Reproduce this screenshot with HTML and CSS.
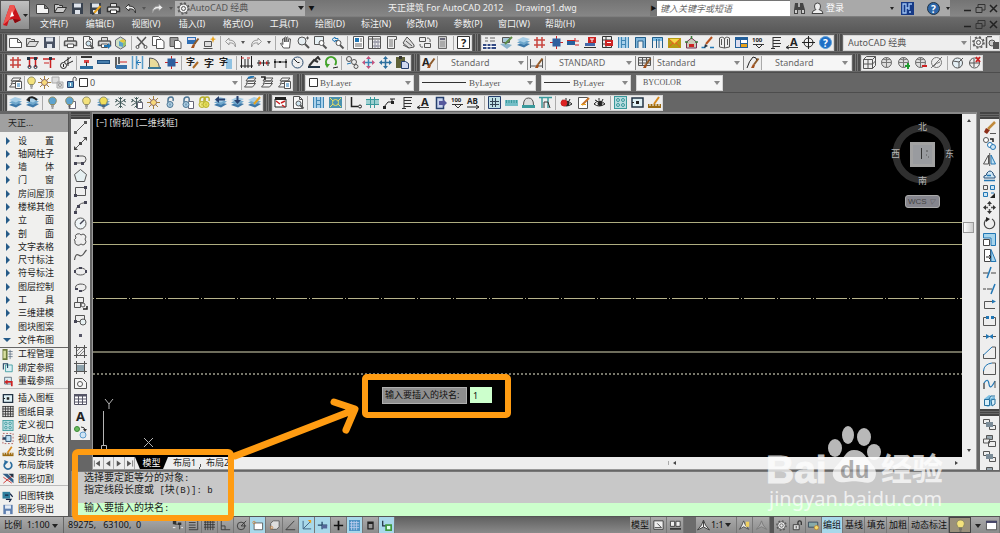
FILE: index.html
```html
<!DOCTYPE html>
<html lang="zh-CN">
<head>
<meta charset="utf-8">
<title>天正建筑 For AutoCAD 2012</title>
<link rel="stylesheet" href="styles.css">
</head>
<body class="app">
<header class="header">
  <button class="logo" aria-label="应用程序菜单">
    <svg width="28" height="28" viewBox="0 0 28 28"><path d="M2 24L9 4h4l7 15-6 3-2-4-4 1-2 6z" fill="#c8141c"/><path d="M9 4h4l1 4-5 10-7 6z" fill="#ef5550"/><path d="M11 10l2 5-4 1z" fill="#fff"/><path d="M12 18l8 1-6 3z" fill="#86090f"/><path d="M22 13h5l-2.500 3z" fill="#222"/></svg>
  </button>
  <div class="header-rows">
    <div class="title-row">
      <div class="quick" data-tools="new-l open-l save-l saveas print-l undo-l v redo-l v"></div>
      <div class="sel workspace"><svg class="sel-icon" data-icon="gear"></svg><select aria-label="工作空间"><option>AutoCAD 经典</option></select></div>
      <button class="mini" aria-label="自定义">▼</button>
      <h1 class="title"><span>天正建筑 For AutoCAD 2012</span><span>Drawing1.dwg</span></h1>
      <button class="mini play" aria-label="展开搜索">▶</button>
      <input class="search" aria-label="搜索" placeholder="键入关键字或短语">
      <div class="account">
        <button class="tool" aria-label="查找"><svg data-icon="binoc"></svg></button>
        <button class="tool" aria-label="用户"><svg data-icon="user"></svg></button>
        <a class="login" href="#">登录</a>
        <span class="caret push"></span>
        <button class="tool wide" aria-label="Exchange"><svg data-icon="exchange"></svg></button>
        <button class="tool wide" aria-label="帮助"><svg data-icon="help-c"></svg></button>
        <span class="caret"></span>
      </div>
      <div class="win" data-tools="min restore close"></div>
    </div>
    <div class="menu-row">
      <nav class="menu">
        <button>文件(F)</button><button>编辑(E)</button><button>视图(V)</button><button>插入(I)</button><button>格式(O)</button><button>工具(T)</button><button>绘图(D)</button><button>标注(N)</button><button>修改(M)</button><button>参数(P)</button><button>窗口(W)</button><button>帮助(H)</button>
      </nav>
      <div class="win" data-tools="min restore close"></div>
    </div>
  </div>
</header>

<section class="bars">
  <div class="bar-row">
    <i class="grip"></i>
    <div class="strip w-std" data-tools="new open save | print preview publish threed | cut copy paste match block | undo v redo v | hand zoomrt zoomwin zoomprev | props dcenter palette sheets markup calc | help"></div>
    <i class="grip"></i>
    <div class="strip w-tz" data-tools="lgrid ledit layers hash column beam redbox redgrid win1 win2 win3 env house penline book appwin level comb aarrow target bluehelp"></div>
    <i class="grip"></i>
    <div class="strip grow">
      <div class="sel w-space"><select class="big" aria-label="工作空间列表"><option>AutoCAD 经典</option></select></div>
      <div class="inner" data-tools="gear wsave"></div>
    </div>
  </div>
  <div class="bar-row">
    <i class="grip"></i>
    <div class="strip w-axis" data-tools="hash tt tred axcut | walli bar lwall barrow arch column | zi1 zi zibox | dim1 dim2 dim3 angle crane refresh | findobj movered moveblue pasteb"></div>
    <i class="grip"></i>
    <div class="strip w-style">
      <div class="pair"><button class="tool" aria-label="文字样式"><svg data-icon="abrush"></svg></button><div class="sel"><select class="pad" aria-label="文字样式列表"><option>Standard</option></select></div></div>
      <div class="pair"><button class="tool" aria-label="标注样式"><svg data-icon="dbrush"></svg></button><div class="sel"><select class="pad" aria-label="标注样式列表"><option>STANDARD</option></select></div></div>
      <div class="pair"><button class="tool" aria-label="表格样式"><svg data-icon="tbrush"></svg></button><div class="sel"><select aria-label="表格样式列表"><option>Standard</option></select></div></div>
      <div class="pair"><button class="tool" aria-label="引线样式"><svg data-icon="lbrush"></svg></button><div class="sel"><select class="pad" aria-label="引线样式列表"><option>Standard</option></select></div></div>
    </div>
    <i class="grip"></i>
    <div class="strip w-vis" data-tools="cube sphere spherep spherem nosphere | globe globex"></div>
  </div>
  <div class="bar-row">
    <i class="grip"></i>
    <div class="strip w-layer">
      <div class="inner one" data-tools="layerprop"></div>
      <div class="sel w-layers"><span class="sel-icons"><svg data-icon="bulb"></svg><svg data-icon="sun"></svg><svg data-icon="freeze"></svg><svg data-icon="unlock"></svg><svg data-icon="swatch"></svg></span><select class="layers" aria-label="图层"><option>0</option></select></div>
      <div class="inner three" data-tools="stack stackarrow layerprop"></div>
    </div>
    <i class="grip gap"></i>
    <div class="strip serif w-color"><div class="sel"><svg class="sel-icon" data-icon="swatch"></svg><select class="color" aria-label="颜色"><option>ByLayer</option></select></div></div>
    <i class="split"></i>
    <div class="strip serif w-ltype"><div class="sel"><i class="rule"></i><select class="ltype" aria-label="线型"><option>ByLayer</option></select></div></div>
    <i class="split"></i>
    <div class="strip serif w-lweight"><div class="sel"><i class="rule short"></i><select class="lweight" aria-label="线宽"><option>ByLayer</option></select></div></div>
    <i class="split"></i>
    <div class="strip serif w-plot"><div class="sel"><select class="plot" aria-label="打印样式"><option>BYCOLOR</option></select></div></div>
  </div>
  <div class="bar-row">
    <i class="grip"></i>
    <div class="strip w-lay2" data-tools="layers layersback | bulbblue bulbpage bulb bulblayer snow snowpage sun lockblue lockpage lockyel layersleft layersdown layerspen"></div>
    <i class="grip"></i>
    <div class="strip w-tz2" data-tools="frameb preview | win1 bluebox | axis teal node comb aarrow door level abarrow | gridteal ruler archteal legs | eyered notepen eye | dots frame scale2"></div>
  </div>
</section>

<main class="work">
  <aside class="side">
    <h2 class="side-title">天正...</h2>
    <ul class="cats">
      <li><button><i class="tri"></i><span>设 置</span></button></li>
      <li><button><i class="tri"></i><span>轴网柱子</span></button></li>
      <li><button><i class="tri"></i><span>墙 体</span></button></li>
      <li><button><i class="tri"></i><span>门 窗</span></button></li>
      <li><button><i class="tri"></i><span>房间屋顶</span></button></li>
      <li><button><i class="tri"></i><span>楼梯其他</span></button></li>
      <li><button><i class="tri"></i><span>立 面</span></button></li>
      <li><button><i class="tri"></i><span>剖 面</span></button></li>
      <li><button><i class="tri"></i><span>文字表格</span></button></li>
      <li><button><i class="tri"></i><span>尺寸标注</span></button></li>
      <li><button><i class="tri"></i><span>符号标注</span></button></li>
      <li><button><i class="tri"></i><span>图层控制</span></button></li>
      <li><button><i class="tri"></i><span>工 具</span></button></li>
      <li><button><i class="tri"></i><span>三维建模</span></button></li>
      <li><button><i class="tri"></i><span>图块图案</span></button></li>
      <li><button><i class="tri down"></i><span>文件布图</span></button></li>
    </ul>
    <ul class="cats cmds">
      <li><button><svg data-icon="proj"></svg><span>工程管理</span></button></li>
      <li><button><svg data-icon="bind"></svg><span>绑定参照</span></button></li>
      <li><button><svg data-icon="reload"></svg><span>重载参照</span></button></li>
      <li class="line"></li>
      <li><button><svg data-icon="frame"></svg><span>插入图框</span></button></li>
      <li><button><svg data-icon="grid"></svg><span>图纸目录</span></button></li>
      <li><button><svg data-icon="dots"></svg><span>定义视口</span></button></li>
      <li><button><svg data-icon="vpzoom"></svg><span>视口放大</span></button></li>
      <li><button><svg data-icon="scale2"></svg><span>改变比例</span></button></li>
      <li><button><svg data-icon="rotb"></svg><span>布局旋转</span></button></li>
      <li><button><svg data-icon="clip"></svg><span>图形切割</span></button></li>
      <li class="line"></li>
      <li><button><svg data-icon="oldnew"></svg><span>旧图转换</span></button></li>
      <li><button><svg data-icon="export"></svg><span>图形导出</span></button></li>
    </ul>
  </aside>

  <div class="vbar"><i class="hgrip"></i><div class="vstrip" data-tools="line xline pline polygon rect arc circle cloud spline ellipse ellarc insert mkblock point hatch gradient region table bigA addsel"></div></div>

  <section class="view">
    <div class="canvas">
      <svg class="drawing" width="100%" height="100%">
        <path d="M0 108.500H2000M0 130.500H2000" stroke="#aead80"/>
        <path d="M0 184.500H2000" stroke="#b8b48c" stroke-dasharray="1 2 31 2"/>
        <path d="M0 238H2000" stroke="#6e6d5c" stroke-width="2"/>
        <path d="M0 260H2000" stroke="#77776a" stroke-width="2" stroke-dasharray="2 2"/>
        <g stroke="#b5b5b5" fill="none"><path d="M10.500 297v34M8.500 331.500h5v5h-5zM12 285l4 5 4-5M16 290v5M51 324l9 9M60 324l-9 9"/></g>
      </svg>
      <p class="vp-label">[−] [俯视] [二维线框]</p>
      <div class="compass">
        <svg width="62" height="62" viewBox="0 0 62 62"><circle cx="31" cy="31" r="26" fill="none" stroke="#2f2f2f" stroke-width="7"/><path d="M19 19h25v25H19z" fill="#a2a2a2"/><path d="M22 22h19v19H22z" fill="#999b9f"/><path d="M30.500 25v11" stroke="#333"/><path d="M35 28h2M37 34h1M35 32h1" stroke="#555"/></svg>
        <span class="n">北</span><span class="w">西</span><span class="e">东</span><span class="s">南</span>
        <button class="wcs">WCS <i>▽</i></button>
      </div>
      <div class="prompt"><label for="blk">输入要插入的块名:</label><input id="blk" value="1"></div>
    </div>
    <div class="vscroll"><i class="up"></i><i class="thumb"></i><i class="dn"></i></div>
    <div class="tabs">
      <div class="nav" data-tools="first prev next last"></div>
      <button class="tab on">模型</button><button class="tab">布局1</button><button class="tab">布局2</button>
      <div class="hscroll"><i class="lt"></i><i class="rt"></i></div>
    </div>
  </section>

  <div class="vbar right"><i class="hgrip"></i><div class="vstrip" data-tools="erase copyo mirror offset array moved rotate scale stretch trim extend breakpt break join chamfer fillet blend explode"></div><i class="hgrip"></i><div class="vstrip" data-tools="ord1 ord2 ord1 ord2"></div></div>

  <section class="cmd">
    <p>选择要定距等分的对象<span>:</span></p>
    <p>指定线段长度或<span> [</span>块<span>(B)]: b</span></p>
    <div class="cmd-in"><label for="ci">输入要插入的块名<span>:</span></label><input id="ci"></div>
  </section>
</main>

<footer class="status">
  <button class="ratio">比例&nbsp; 1:100 <i class="caret"></i></button>
  <output class="coords">89275,&nbsp;&nbsp; 63100,&nbsp; 0</output>
  <div class="modes" data-tools="snapm snapd gridm ortho polar osnap+ osnap3 angm otrack+ ducs+ dyn lwt+ qp sc+"></div>
  <span class="void"></span>
  <button class="st">模型</button>
  <div class="modes two" data-tools="lay1 lay2"></div>
  <span class="notch"></span>
  <button class="st anno"><svg data-icon="anno"></svg>1:1 <i class="caret"></i></button>
  <div class="modes two" data-tools="annob annog"></div>
  <i class="dark"></i>
  <div class="modes three" data-tools="gear unlock2 hw"></div>
  <button class="st on">编组</button><button class="st">基线</button><button class="st">填充</button><button class="st">加粗</button><button class="st">动态标注</button>
  <button class="st bulbs" aria-label="隔离对象"><svg data-icon="bulb"></svg></button>
  <button class="st more" aria-label="更多"><i class="caret"></i></button>
  <div class="modes single" data-tools="full"></div>
</footer>

<svg class="notes" width="1000" height="533" viewBox="0 0 1000 533" aria-hidden="true">
  <g class="mark">
    <text x="766" y="483" class="mk-big">Bai</text>
    <ellipse cx="835" cy="448" rx="7" ry="9"/><ellipse cx="848" cy="435" rx="6" ry="9"/><ellipse cx="864" cy="437" rx="7" ry="9"/><ellipse cx="874" cy="452" rx="7" ry="8"/>
    <path d="M854 450c10 0 11 7 17 13 5 5 6 10 4 15-3 6-9 5-13 4-6-1-10-1-16 0-5 1-11 0-13-6-1-6 2-9 6-13 5-5 7-13 15-13z"/>
    <text x="840" y="478" class="mk-du">du</text>
    <text x="881" y="480" class="mk-cn">经验</text>
    <text x="769" y="506" class="mk-url">jingyan.baidu.com</text>
  </g>
  <g fill="none" stroke="#ff9c12" stroke-linecap="round" stroke-linejoin="round">
    <rect x="75" y="452" width="156" height="66" rx="3" stroke-width="6"/>
    <rect x="365" y="377" width="143" height="38" rx="2" stroke-width="6"/>
    <path d="M235 456L354 410M334 402l21 7-9 21" stroke-width="7"/>
  </g>
</svg>
<script src="app.js"></script>
</body>
</html>
```
FILE: styles.css
```css
* { box-sizing: border-box; }
.app {
  margin: 0; height: 100vh; overflow: hidden; position: relative;
  display: grid; grid-template-rows: 32px auto 1fr 17px;
  background: #666; color: #222;
  font: 9px/12px "Noto Sans", "Noto Sans CJK SC", sans-serif;
}
button, input, select { font: inherit; color: inherit; margin: 0; padding: 0; border: 0; background: none; border-radius: 0; min-width: 0; }
button { white-space: nowrap; }
p, h1, h2, ul { margin: 0; padding: 0; font-weight: normal; list-style: none; }
svg { display: block; }
svg[data-icon], .tool svg { width: 13px; height: 13px; flex: none; overflow: visible; }

.caret { display: inline-block; border: 3px solid transparent; border-top: 4px solid #222; border-bottom: 0; width: 0; height: 0; }
.tool { flex: 1 1 17px; height: 16px; display: grid; place-content: center; overflow: visible; }
.drop { flex: 0 0 9px; height: 16px; display: grid; place-content: center; }
.drop::after { content: ""; border: 2px solid transparent; border-top: 3px solid #555; border-bottom: 0; }
.sep { flex: 0 0 4px; height: 16px; display: grid; justify-content: center; }
.sep::after { content: ""; width: 1px; height: 16px; background: #aaa; }

/* header */
.header { display: grid; grid-template-columns: 30px 1fr; background: linear-gradient(#747474, #868686 50%, #6a6a6a 55%, #595959); }
.logo { width: 30px; height: 30px; background: linear-gradient(#c0c0c0, #8c8c8c); border: 1px solid #555; }
.header-rows { display: grid; grid-template-rows: 16px 16px; min-width: 0; }
.title-row, .menu-row { display: flex; align-items: center; }
.quick { display: flex; width: 145px; padding-left: 4px; }
.sel { display: grid; grid-template-columns: 1fr; align-items: center; flex: 1; min-width: 0; }
.sel > * { grid-area: 1 / 1; }
.sel select { appearance: none; width: 100%; height: 14px; line-height: 14px; padding: 0 12px 0 3px; }
.sel::after { content: ""; grid-area: 1 / 1; justify-self: end; margin-right: 3px; border: 3px solid transparent; border-top: 4px solid #888; border-bottom: 0; }
.sel.workspace { flex: 0 0 130px; height: 15px; background: #b2b2b2; color: #555; }
.sel.workspace::after { border-top-color: #222; margin-right: 1px; }
.sel.workspace select { font-size: 9px; padding-left: 15px; }
.sel-icon { margin-left: 2px; }
.mini { flex: 0 0 13px; color: #111; font-size: 6px; }
.title { flex: 1; display: flex; gap: 12px; padding-left: 70px; color: #f0f0f0; font-size: 9px; line-height: 16px; white-space: nowrap; }
.mini.play { flex: 0 0 7px; height: 15px; background: #777; }
.search { flex: 0 0 133px; height: 15px; background: #fff; padding: 0 3px; font-style: italic; color: #555; }
.search::placeholder { color: #666; }
.account { display: flex; align-items: center; flex: 0 0 160px; height: 16px; background: #a9a9a9; }
.account .tool { flex: 0 0 18px; }
.account .tool.wide { flex: 0 0 26px; }
.account .caret { border-width: 3px 2px 0; }
.login { color: #fff; text-decoration: none; }
.push { margin-left: auto; }
.win { display: flex; flex: 0 0 50px; padding-left: 11px; }
.win .tool { flex: 0 0 13px; }
.menu-row { justify-content: space-between; }
.menu { display: flex; padding-left: 1px; }
.menu button { width: 46px; color: #f2f2f2; line-height: 16px; text-align: center; }

/* toolbars */
.bars { display: grid; grid-auto-rows: 20px; }
.bar-row { display: flex; align-items: center; border-top: 1px solid #4d4d4d; }
.grip { flex: 0 0 7px; margin: 0 1px 0 0; height: 17px; background: linear-gradient(90deg, #4c4c4c 2px, #777 2px 3px, #4c4c4c 3px 4px, #777 4px 5px, #4c4c4c 5px); }
.bar-row > .grip:first-child { margin: 0; }
.strip + .grip { margin-left: 1px; }
.strip + .grip.gap { margin-left: 4px; }
.strip { display: flex; align-items: center; height: 16px; background: #eee; outline: 1px solid #d5d5d5; outline-offset: -1px; }
.inner { display: flex; }
.w-std { width: 465px; } .w-tz { width: 353px; } .grow { flex: 1; }
.w-space { flex: 0 0 128px; border-right: 1px solid #999; color: #555; } .grow .inner { flex: 1; }
.w-space .big { padding-left: 5px; }
.w-axis { width: 404px; } .w-style { width: 432px; } .w-vis { width: 122px; }
.pair { flex: 1; display: flex; align-items: center; border-right: 1px solid #888; }
.pair .tool { flex: 0 0 17px; } .pair .sel { border-left: 1px solid #aaa; color: #666; background: #f6f6f6; }
.pair .pad { padding-left: 13px; }
.w-layer { width: 286px; } .one { width: 17px; } .three { width: 51px; }
.w-layers { background: #f8f8f8; border: 1px solid #aaa; height: 16px; color: #555; }
.sel-icons { display: flex; padding-left: 0; }
.layers.layers { padding-left: 65px; }
.serif { background: #f6f6f6; color: #555; font-family: "Liberation Serif", serif; }
.w-color { width: 109px; } .w-ltype { width: 117px; } .w-lweight { width: 90px; } .w-plot { width: 87px; }
.split { flex: 0 0 5px; }
.sel .color { padding-left: 15px; } .sel .ltype { padding-left: 50px; } .sel .lweight { padding-left: 32px; } .sel .plot { padding-left: 7px; font-size: 8px; }
.rule { height: 1px; width: 44px; margin-left: 3px; background: #333; } .rule.short { width: 26px; }
.w-lay2 { width: 256px; } .w-tz2 { width: 391px; }

/* workspace */
.work { display: grid; grid-template-columns: 69px 23px 1fr 23px; grid-template-rows: 1fr 45px; min-height: 0; }
.side { grid-row: 1 / 3; background: #f0f0ee; border-right: 1px solid #555; display: flex; flex-direction: column; color: #222; }
.side-title { flex: 0 0 20px; margin-bottom: 2px; padding-left: 8px; font-size: 9px; line-height: 17px; background: #a0a0a0; border-top: 2px solid #666; }
.cats { flex: 212; display: flex; flex-direction: column; border-bottom: 1px solid #666; }
.cats li { flex: 1; display: grid; align-items: center; }
.cats button { display: flex; align-items: center; text-align: left; height: 12px; padding-left: 2px; gap: 3px; line-height: 12px; }
.cats span { width: 36px; text-align-last: justify; }
.cats svg[data-icon] { width: 12px; height: 11px; margin-right: 1px; }
.tri { margin: 0 5px 0 4px; width: 4px; border: 4px solid transparent; border-left: 4px solid #255b88; border-right: 0; }
.tri.down { width: 0; margin: 0 4px 0 1px; border: 4px solid transparent; border-top-color: #255b88; border-bottom: 0; }
.cats .line.line { flex: 0 0 4px; border-top: 1px solid #bbb; }
.cmds { flex: 168; border: 0; }
.vbar { width: 19px; margin-left: 2px; align-self: start; background: #eee; height: 328px; display: flex; flex-direction: column; }
.vbar.right { height: 358px; margin-left: 3px; overflow: hidden; }
.hgrip { flex: 0 0 7px; background: linear-gradient(#444 2px, #666 2px 3px, #444 3px 4px, #666 4px 5px, #444 5px); }
.vstrip { display: flex; flex-direction: column; flex: 1; }
.vstrip .tool { flex: 1 1 16px; height: 16px; }
.right .vstrip { flex: 0 0 290px; } .right .hgrip ~ .hgrip ~ .vstrip { flex: 0 0 64px; }
.view { display: grid; grid-template-columns: 1fr 14px; grid-template-rows: 1fr 12px; border: 1px solid #999; border-top: 2px solid #888; min-width: 0; margin-bottom: 1px; }
.canvas { position: relative; background: #000; overflow: hidden; }
.drawing { position: absolute; inset: 0; }
.vp-label { position: absolute; left: 3px; top: 3px; color: #ddd; }
.compass { position: absolute; right: 9px; top: 9px; width: 62px; color: #b5b5b5; line-height: 12px; }
.compass span { position: absolute; }
.n { left: 27px; top: -2px; } .s { left: 27px; top: 52px; } .w { left: 0; top: 25px; } .e { right: -1px; top: 25px; }
.wcs { display: block; margin: 10px 0 0 14px; width: 35px; height: 13px; border-radius: 3px; background: #85858d; border: 1px solid #aaa; color: #444; font: 8px/11px "Liberation Sans", sans-serif; text-align: left; padding-left: 2px; }
.wcs i { font-size: 6px; }
.prompt { position: absolute; left: 289px; top: 273px; display: flex; gap: 3px; color: #111; }
.prompt label { width: 85px; height: 17px; padding: 1px 2px; background: #8e8e8e; border: 1px solid #b0b0b0; }
.prompt input { width: 22px; height: 16px; background: #cfc; padding: 0 3px; }
.vscroll { background: #eee; display: flex; flex-direction: column; align-items: center; justify-content: space-between; padding: 5px 0; position: relative; }
.vscroll .thumb { position: absolute; top: 108px; left: 1px; width: 11px; height: 11px; background: linear-gradient(90deg, #fff, #ccc); border: 1px solid #999; }
.up, .dn, .lt, .rt { border: 2px solid transparent; }
.up { border-bottom: 3px solid #444; border-top: 0; } .dn { border-top: 3px solid #444; border-bottom: 0; }
.lt { border-right: 3px solid #444; border-left: 0; } .rt { border-left: 3px solid #444; border-right: 0; }
.tabs { grid-column: 1 / 3; display: flex; align-items: center; background: #eee; overflow: hidden; }
.nav { display: flex; width: 42px; } .nav .tool { height: 12px; border-right: 1px solid #aaa; } .nav .tool svg { width: 9px; height: 9px; }
.tab { flex: 0 0 33px; height: 12px; line-height: 12px; background: linear-gradient(108deg, transparent 94%, #555 94% 97%, transparent 97%); }
.tab.on { background: #000; color: #fff; clip-path: polygon(0 0, 100% 0, 85% 100%, 15% 100%); }
.hscroll { flex: 1; margin: 0 14px 0 434px; padding: 0 4px; display: flex; justify-content: space-between; border-left: 1px solid #aaa; }
.cmd { grid-column: 2 / 5; display: flex; flex-direction: column; background: #c8c8c8; border-left: 7px solid #8b8b8b; border-top: 1px solid #777; color: #222; font: 10px/12px "Liberation Mono", "Noto Sans CJK SC", monospace; margin-left: 2px; }
.cmd p { padding: 1px 0 0 6px; height: 12px; }
.cmd span { font-size: 9px; }
.cmd-in { margin-top: auto; display: flex; height: 13px; padding-left: 6px; background: #cfc; }
.cmd-in input { flex: 1; }

/* status bar */
.status { display: flex; align-items: center; background: linear-gradient(#aaa, #8c8c8c); border-top: 1px solid #555; color: #111; }
.ratio { width: 64px; height: 16px; text-align: left; padding-left: 4px; border-right: 1px solid #666; }
.coords { width: 106px; padding-left: 4px; }
.modes { display: flex; width: 225px; } .modes.two { width: 33px; } .modes.three { width: 48px; } .modes.single { width: 17px; }
.modes .tool { border-right: 1px solid #777; flex: 1 1 16px; }
.modes .tool svg { width: 11px; height: 11px; }
.tool.on, .st.on { background: #a8d8ea; }
.void { flex: 1; height: 16px; background: linear-gradient(#606060, #8a8a8a); }
.notch { width: 12px; height: 16px; background: #6c6c6c; }
.dark { width: 4px; height: 16px; background: #555; }
.st { height: 16px; padding: 0 1px; border-right: 1px solid #777; }
.st + .st { padding-left: 2px; }
.anno { display: flex; align-items: center; gap: 1px; width: 41px; }
.bulbs { width: 22px; display: grid; place-content: center; border: 1px solid #444; background: #9a917c; }
.more { width: 12px; border: 0; }

/* annotations above the page */
.notes { position: absolute; left: 0; top: 0; pointer-events: none; }
.mark { fill: #fff; opacity: 0.72; font-family: "Noto Sans", sans-serif; }
.mk-big { font: bold 39px "Liberation Sans", sans-serif; stroke: #fff; stroke-width: 1px; }
.mk-du { font: bold 24px "Liberation Sans", sans-serif; fill: #999; }
.mk-cn { font: bold 31px "Noto Sans CJK SC", sans-serif; }
.mk-url { font-size: 20px; }
```
FILE: app.js
```js
const K = '#555', B = '#2277b5', R = '#c22', Y = '#e8a21c', T = '#3a9a9c', N = '#26406e';
const p = (d, s = K, f = 'none', w = 1) => `<path d="${d}" stroke="${s}" fill="${f}" stroke-width="${w}"/>`;
const f = (d, c) => `<path d="${d}" fill="${c}"/>`;
const c = (x, y, r, s = K, fl = 'none') => `<circle cx="${x}" cy="${y}" r="${r}" stroke="${s}" fill="${fl}"/>`;
const t = (x, y, s, z = 11, col = '#222') => `<text x="${x}" y="${y}" font-size="${z}" font-weight="bold" fill="${col}">${s}</text>`;

const page = p('M2.500 .5h6l3 3v9h-9zM8.500 .5v3h3', K, '#fafafa');
const lens = p('M9 9l3.500 3.500', K, 'none', 2) + c(7.5, 7.5, 2.500, K, '#cfe6f2');
const plus = f('M8 9h2V7h2v2h1v2h-1v2h-2v-2H8z', '#1f9a2f');
const brush = f('M5 12l2-4 2 1-1 3z', '#a3501c') + p('M8 8.500l4.500-6', '#8c5a2a', 'none', 2);
const pencil = p('M5 11l6.500-7', Y, 'none', 2) + f('M3 13l1-3 2 2z', '#333');
const layersBase = f('M0 9l6-3 7 2-6 3.500z', '#3e78a8') + f('M0 6.500l6-3 7 2-6 3.500z', '#6fa7cc') + f('M0 4l6-3 7 2-6 3.500z', '#a6cde6');
const stackBase = p('M.5 11l3-3.500h8l-3 3.500zM2 8l2-3h8l-3 3M2 5l2-3h8L9.500 5z', K, '#f4f4f4');
const disk = (a, b) => f('M1 1h11v11H1z', a) + f('M3 1.500h7v4H3z', b) + f('M4 8h5v4H4z', b);
const printer = (s, a) => p('M3.500 5V1.500h6V5', s, a) + p('M1.500 5h10q1 0 1 1v3.500H.5V6q0-1 1-1z', s, a, 1.500) + p('M3.500 8h6v3.500h-6z', s, '#fff');
const bulbOf = (col) => p('M4.500 8.500C1 5 3 1 6.500 1S12 5 8.500 8.500z', '#8d8a60', col) + p('M5 10h3M5.500 12h2', '#555');
const lock = (s, a, dx = 0) => `<g transform="translate(${dx})">` + p('M4 6V4q0-3 3-3t2 4', s, 'none', 1.500) + c(6, 8.500, 3, s, a) + p('M6 7.500v2', s) + '</g>';
const hash = (col) => p('M4 1v11M9 1v11M1 4h11M1 9h11', col, 'none', 1.500);
const snow = p('M6.500 1v11M1.500 3.500l10 6M11.500 3.500l-10 6M4.500 1.500l2 2 2-2M4.500 11.500l2-2 2 2M1 6l2-1-.5-2M12 6l-2-1 .5-2', '#455c5c');
const sph = c(6.5, 6.500, 5, '#666', '#ddd') + p('M1.500 6.500h10M6.500 1.500v10M3 3q3.500 2 7 0', '#777');
const moveOf = (a, b) => p('M6.500 2v9M2 6.500h9', b, 'none', 1.500) + f('M6.500 0l2.500 3H4zM6.500 13l2.500-3H4zM0 6.500l3-2.500v5zM13 6.500l-3-2.500v5z', a);
const comb = p('M4 1v11M4 1.500h8M4 4.500h7M4 7.500h8M4 10.500h7M2 12.500h4', '#333');
const gear = c(6.5, 6.500, 4.500, '#555', '#eee') + c(6.5, 6.500, 2, '#555') + `<circle cx="6.500" cy="6.500" r="5.500" fill="none" stroke="#555" stroke-width="1.500" stroke-dasharray="2 2.300"/>`;
const blueWin = (d) => f('M1 1h11v11H1z', '#a8d0ea') + p(d, '#3f86b4');
const eye = p('M1 8q5-6 11 0M1 8q5 4 11 0', '#222') + c(7, 7.500, 2, '#222', '#222') + p('M2 4l2 1M6 2v2M10 3l-1 2', '#222');
const undo = (s) => p('M5 2L1.500 5.500 5 9V7q5-1 6.500 4 .5-7-6.500-7z', s, '#eee');
const redo = (s) => p('M8 2l3.500 3.500L8 9V7q-5-1-6.500 4Q1 4 8 4z', s, '#eee');

const ICONS = {
  'new': p('M.5 2.500h8l4 4v5h-12zM8.500 2.500v4h4', K, '#fff'),
  'new-l': p('M.5 2.500h8l4 4v5h-12zM8.500 2.500v4h4', '#444', '#f4f4f4'),
  open: p('M.5 10.500v-8h4l1 1h3v2M.5 10.500l3-5h9l-3 5z', K, '#ddd'),
  'open-l': p('M.5 10.500v-8h4l1 1h3v2M.5 10.500l3-5h9l-3 5z', '#333', '#ccc'),
  save: disk('#4a5364', '#dfe4ec'), 'save-l': disk('#39424f', '#dfe4ec'),
  saveas: disk('#39424f', '#dfe4ec') + pencil,
  print: printer(K, '#ddd'), 'print-l': printer('#333', '#ddd'),
  preview: page + lens,
  publish: printer(K, '#ddd') + f('M6 9h4V7l3 3-3 3v-2H6z', B),
  threed: p('M1.500 4l5-3 5 3v6l-5 3-5-3z', '#667', '#cfe0c4') + f('M5 5l4-2 3 2-3 2z', '#e4c93e') + f('M5 5v5l4 1V7z', '#5aa3cf') + f('M9 7l3-2v4l-3 2z', '#9ac26c'),
  cut: p('M2 1l8 9M11 1L3 10', K, 'none', 1.500) + c(2.5, 11, 1.500) + c(10.5, 11, 1.500),
  copy: p('M.5 .5h6l2 2v7h-8z', K, '#fff') + p('M4.500 3.500h5l2.500 2v7H4.500z', K, '#fff'),
  paste: p('M1 1.500h8v9H1z', K, '#999') + p('M5.500 4.500h4l2.500 2v6H5.500z', K, '#fff'),
  pasteb: f('M0 1h9v11H0z', '#5f6238') + f('M3 0h3v3H3z', '#333') + p('M5.500 5.500h4l3 2v5h-7z', N, '#cfd8f0'),
  match: f('M1 1h9v7H1z', '#2f6fb5') + f('M2 2h7v2H2z', '#dde') + brush,
  block: p('M1.500 5.500h7v5h-7z', K, '#ddd') + p('M.5 12.500h9') + f('M10 0l1 2.500L13 3l-2 1-1 3-1-3-2-1 2-.5z', Y),
  undo: undo('#999'), redo: redo('#999'), 'undo-l': undo('#333'), 'redo-l': redo('#999'),
  hand: p('M3.500 12L.5 7.500q1-1 2.500 1L2.500 3q1-1 1.500 0l.5 3V1.500q1-1 1.500 0V6l.5-4.500q1-1 1.500 0L8 6l1-3q1-1 1.500 0l-1 9z', K, '#fff'),
  zoomrt: c(5, 5, 4, K, '#e6eef2') + p('M8 8l4 4', K, 'none', 2) + p('M9 2h3M10.500 .5v3'),
  zoomwin: p('M.5 .5h9v8h-9z', K, '#e8f2f6') + c(7.5, 7, 2.500, K, '#fff') + p('M9 9l3.500 3.500', K, 'none', 2),
  zoomprev: p('M4 1L1 3.500 4 6V4.500h3v-2H4z', B) + c(7.5, 7, 2.500, K, '#fff') + p('M9 9l3.500 3.500', K, 'none', 2),
  props: p('M1.500 .5h10v12h-10z', K, '#fff') + f('M3 2h4v4H3z', B) + p('M3 8h7M3 10h7M8 3h2M8 5h2', '#666'),
  dcenter: p('M.5 .5h12v12H.5zM4.500 .5v12M.5 3h12', K, '#eee') + p('M6 5h2v2H6zM9 5h2v2H9zM6 9h2v2H6zM9 9h2v2H9z', '#889'),
  palette: p('M2.500 .5h9v3h-2v9h-7z', K, '#eee') + p('M4 4h4M4 6h4M4 8h4M4 10h4', '#777'),
  sheets: p('M1 7l4-6 3 3 4 5v2l-5 1zM1 9l6 3M4 5l6 5', '#555', '#ddd'),
  markup: p('M.5 1.500h6v4h-6zM5.500 7.500h6v4h-6z', K, '#eee') + p('M8 2q4 0 3 4M1 8q0 4 3 3', K),
  calc: p('M2.500 .5h8v12h-8z', '#666', '#ccc') + f('M4 2h5v2H4z', '#667') + p('M4 6h5M4 8h5M4 10h5', '#888'),
  help: p('M.5 .5h12v12H.5z', '#333', '#fff') + t(4, 11, '?'),
  lgrid: p('M2 2h3M2 5h3M7 2h5M7 5h5', '#666') + f('M0 8h13v5H0z', '#334a84') + p('M4 8v5M8 8v5M0 10.500h13', '#fff'),
  ledit: p('M2.500 1.500h7v5h-7z', K, '#a8c8d8') + f('M0 8l6-1 6 2-5 4z', '#8bb4cb') + p('M5 8l7-7', '#5c8c46', 'none', 2),
  layers: layersBase,
  layersback: layersBase + p('M2 3q4-4 9 1', '#222', 'none', 2) + f('M0 4l4-3v5z', '#222'),
  layersleft: layersBase + p('M4 3.500h7', N, 'none', 2) + f('M1 3.500L5 0v7z', N),
  layersdown: layersBase + p('M6.500 0v5', N, 'none', 2) + f('M3 4h7l-3.500 4z', N),
  layerspen: layersBase + p('M6 8l6-7', Y, 'none', 2),
  hash: hash('#c8453f'),
  column: p('M6.500 0v13M0 6.500h13', R) + f('M2.500 2.500h8v8h-8z', '#2f5f9e'),
  beam: f('M0 5h8v4H0z', '#26609c') + p('M0 4.500h8M8 2v3h4M8 9h4', R),
  redbox: f('M0 11h12v1H0z', '#333') + f('M4 1h8v6H4z', R) + p('M6 3h4M8 3v3', '#fff') + f('M1 7h10v3H1z', '#4468a8'),
  redgrid: p('M1.500 .5h9v11h-9zM1.500 4h9M1.500 8h9M5 .5v11', '#333', '#eee') + f('M4 4h8v6H4z', R) + p('M6 6.500h4', '#fff'),
  win1: blueWin('M1.500 1v11M4.500 1v11M8.500 1v11M11.500 1v11M4 4.500h4M4 8.500h4'),
  win2: f('M1 1h11v11H9V5H4v7H1z', '#7fb6dc') + p('M1.500 12V1.500h10V12M4 12V5h5v7', '#245f8a'),
  win3: f('M1 1h11v4H1z', '#7fc0e8') + p('M1.500 12V1.500h10V12M5.500 3v9M8 3v9', '#245f8a'),
  env: f('M0 2h13v10H0z', '#b59b14') + p('M1 3l5.500 5L12 3M1 11l4-4M12 11L8 7', '#e85c20', '#f4d94a'),
  house: p('M1.500 6l5-4 5 4v6h-10z', '#735', '#c9c9b8') + f('M4 8h5v3H4z', R) + p('M0 6h3M10 6h3M6.500 0v3', '#3a7a3a', 'none', 1.500),
  penline: p('M.5 11.500h4M9 11.500h4', B, 'none', 1.500) + p('M5 8l6-7', '#b5521f', 'none', 2) + f('M3 12l1-4 3 2z', '#234'),
  book: p('M6.500 3v9l-5-1V2q4-2 5 1zq1-3 5-1v9l-5 1M3.500 3v6M9.500 3v6', '#555', '#eee'),
  appwin: f('M0 1h13v11H0z', '#245f9a') + f('M1 4h4v7H1z', '#dde') + f('M6 4h6v3H6z', '#fff') + f('M6 8h6v3H6z', Y),
  level: t(0, 6, '100', 6) + p('M1 8.500h11M4 9l3 3 3-3', '#333'),
  comb,
  aarrow: t(4, 10, 'A') + p('M0 11.500h12M0 11.500l3-2M0 11.500l3 1.500', '#333'),
  target: c(6.5, 6.500, 4.500, '#222') + p('M6.500 0v13M0 6.500h13', '#222'),
  bluehelp: c(6.5, 6.500, 6, '#5a9ed8', '#1f6fc6') + t(4, 11, '?', 10, '#fff'),
  gear, wsave: p('M1 .5h5M.5 1v11', '#555', 'none', 1.500) + c(6, 7, 3, '#555', '#ccc') + f('M7 6h6v7H7z', '#555'),
  tt: p('M1 2h11M3.500 2v9M9.500 2v9', R, 'none', 1.500) + f('M1 1h3v3H1zM8 1h3v3H8z', '#234') + c(3.5, 11, 1.500, '#234') + c(9.5, 11, 1.500, '#234'),
  tred: p('M0 3h12M7.500 3v9', R, 'none', 1.500) + f('M6 1h3v3H6z', '#234') + p('M1 7h5', R),
  axcut: c(3.5, 9.500, 3, '#222') + p('M3.500 8v3M4 6l7-5M7 8l6-3M8 1v9', '#222'),
  walli: f('M1 0h11v2H1z', '#333') + f('M4 4h5v3H4z', '#d44') + f('M6 6h1v4H6z', '#333') + f('M0 10h13v3H0z', '#2b6d9e'),
  bar: f('M0 4h13v4H0z', '#21507e') + f('M1 5h11v2H1z', '#477ead'),
  lwall: p('M2 1v11M5 1v7', '#333', 'none', 1.500) + f('M2 9h11v4H2z', '#3672aa') + p('M6 6h7', R),
  barrow: p('M1.500 0v13M5.500 0v13M11.500 0v13', '#5a9cc8', 'none', 1.500) + p('M6 6.500h4M8 4l-3 2.500L8 9', B),
  arch: p('M1.500 12V2q9 0 10 10z', '#555', '#e8dc9a') + f('M0 11h13v2H0z', '#3b7a96'),
  zi1: t(0, 9, '字', 9) + p('M7 12l5-6', '#ad6a26', 'none', 2), zi: t(1, 11, '字', 10), zibox: f('M7 3h6v10H7z', '#8fc2e2') + t(0, 9, '字', 9),
  dim1: p('M1.500 0v12M5 3v9M8 3v9M11.500 0v12M0 10h13', '#222') + p('M1 2h3M7 2h3', R),
  dim2: p('M0 7h13M2 4v6M6.500 4v6M11 4v6', '#222') + f('M2 7l2-2v4zM11 7L9 5v4z', R),
  dim3: p('M1 3v9M12 3v9M1 6h11', '#222') + f('M0 5h2v2H0zM5 5h2v2H5zM11 5h2v2h-2z', '#222'),
  angle: c(6.5, 6.500, 5.500, '#2d4d6e') + p('M6.500 6.500L3 3M6.500 6.500h2', '#222'),
  crane: p('M1 10l5-6 4 2M7 4l3-3 2 3', '#333', 'none', 2) + f('M0 10h12v2H0z', '#234'),
  refresh: p('M2 9a5 5 0 1 1 8 0', '#42a32a', 'none', 2) + f('M0 8h5l-3 4z', '#42a32a') + p('M8 12l5-1', '#222'),
  findobj: c(3, 3, 2.500) + c(8, 6, 2.500) + c(10, 10.500, 2) + p('M1 8l4-1', B),
  movered: moveOf('#c2527e', '#3c86b8'), moveblue: moveOf('#2d6f9e', '#2d6f9e'),
  abrush: t(0, 10, 'A', 11) + brush, dbrush: p('M.5 3v9M12.500 3v9M.5 10h12') + brush,
  tbrush: p('M.5 1.500h12v8H.5zM.5 4h12M.5 7h12M4.500 2v8M8.500 2v8') + brush,
  lbrush: p('M1 12q2-7 6-11 4 0 4 4', '#222') + brush,
  cube: p('M.5 3.500l3-3h9v9l-3 3h-9zM.5 3.500h9v9M9.500 3.500l3-3M5 3.500v9M.5 8h9l3-3', '#555', '#eee'),
  sphere: sph, spherep: sph + plus, spherem: sph + f('M8 9h5v2H8z', R),
  nosphere: c(6.5, 6.500, 5, '#777') + p('M1 12L12 1M4 10q2-3 6-4', '#777'),
  globe: c(6.5, 7, 5, '#555', '#e4eff5') + p('M2 5l6 1 4-4M8 6v6', '#555'),
  globex: c(6.5, 7, 5, '#555', '#eee') + p('M2 7h9M6 3v8', '#555') + p('M8 1l4 5M12 1L8 6', R, 'none', 2),
  layerprop: stackBase + p('M6.500 5.500h6v7h-6z', K, '#fff') + p('M8 8h3M8 10h3', B), stack: stackBase + p('M4 2l6-2', B, 'none', 2), stackarrow: stackBase + p('M0 1h4v3', '#222', 'none', 1.500),
  bulb: bulbOf('#f4e27c'), bulbblue: bulbOf('#5ea3cf'),
  bulbpage: p('M6.500 5.500h6v7h-6z', '#667', '#fff') + bulbOf('#5ea3cf'),
  bulblayer: layersBase + bulbOf('#f0de5a'),
  sun: `<path d="M6.500 0v13M0 6.500h13M2 2l9 9M11 2l-9 9" stroke="#a5803a"/>` + c(6.5, 6.500, 3, '#866', '#f7d97a'),
  freeze: p('M1 1h7v6H1zM6 6h6v6H6z', '#aaa', '#ddd') + c(9, 9, 1.500, '#999'),
  unlock: p('M9 5V3q0-2 2-2t1 4', K) + p('M3.500 5.500h6v6h-6z', N, '#5d9cc0') + p('M6.500 7v3', '#fff'),
  swatch: p('M2.500 2.500h8v8h-8z', '#333', '#fff'),
  snow, snowpage: snow + p('M7.500 6.500h5v6h-5z', '#667', '#fff'),
  lockblue: lock('#4c7594', '#a9cbe0'), lockpage: p('M7.500 5.500h5v7h-5z', '#667', '#fff') + lock('#4c7594', '#a9cbe0', -1), lockyel: lock('#b8b12c', '#f0ea80', -2) + lock('#b8b12c', '#e5dd5a', 2),
  frameb: p('M1 3h11v8H1z', '#222', '#fff') + f('M1 1h11v3H1z', '#222') + p('M2 5l4 3M8 9l3 2M11 5L7 7', R, 'none', 1.500),
  bluebox: f('M0 1h13v11H0z', '#4b92ae') + c(6.5, 6.500, 3, '#e8e060') + p('M1 2l3 3M12 2L9 5M1 11l3-3M12 11L9 8', '#e8e060'),
  axis: p('M2.500 1v9.500H9', '#222', 'none', 1.500) + c(11, 10.500, 1.500, '#222'),
  teal: f('M0 4h13v4H0z', '#9ccfd0') + p('M4.500 1v11M8.500 1v11M0 3.500h13M0 8.500h13', T),
  node: p('M1 11l4-5h4V3M7 3h5', '#222') + f('M0 10h3v3H0zM8 5h3v3H8z', '#222'),
  door: p('M2.500 1.500h7v11h-7z', N, '#c7d2ec', 1.500) + f('M5 5h4V3l4 4-4 4V9H5z', '#55589c'),
  abarrow: t(0, 8, 'AB', 8) + p('M0 11h12M9 9l3 2-3 2', '#222'),
  gridteal: p('M.5 .5h12v12H.5z', N, '#bfe0e6') + p('M4.500 2v9M7.500 2v9M2 5.500h9M2 8.500h9', '#345'),
  ruler: f('M0 4h13v6H0z', '#73bdc6') + p('M1.500 4v3M4 4v3M6.500 4v3M9 4v3M11.500 4v3', T),
  archteal: p('M1.500 9q0-7 5-7t5 7', K, '#ddd') + f('M0 9h13v3H0z', T),
  legs: p('M0 1.500h13M3 2v10M9 2v10', T, 'none', 1.500) + p('M5 12V6h4l2 6', '#333'),
  eye, eyered: eye + c(4, 7, 3, R, '#d22'),
  notepen: p('M1.500 1.500h9v11h-9z', '#555', '#fff') + p('M5 9l7-7', '#c8742a', 'none', 2) + f('M4 8h5v1H4z', Y),
  dots: f('M0 0h13v13H0z', T) + f('M1 1h11v11H1z', '#b9dce0') + c(4, 4, 1.500, T) + c(9, 4, 1.500, T) + c(4, 9, 1.500, T) + c(9, 9, 1.500, T),
  frame: p('M1 2h11v9H1z', '#234', '#dff0f4', 1.500) + f('M5 5h3v3H5zM1 6h2v1H1z', '#222'),
  scale2: f('M0 8h13v4H0z', '#9a6a12') + p('M2 8v2M5 8v2M8 8v2M11 8v2', '#fff') + p('M6 8l5-7', '#d98a1c', 'none', 2),
  line: p('M2 11L11 2') + f('M0 10h3v3H0zM10 0h3v3h-3z', '#555'),
  xline: p('M1 12L12 1') + f('M0 9v4h4zM13 4V0H9zM5 5h3v3H5z', '#444'),
  pline: p('M1 3h8q3 0 3 3.500T8 10H2', '#555') + f('M0 9h3v3H0zM7 9h3v3H7zM3 2h2v2H3z', '#445'),
  polygon: p('M6.500 .5l6 5-2 7h-8l-2-7z', '#555', '#e6f0f2'),
  rect: p('M1.500 2.500h10v8h-10z', '#555', '#eee') + f('M0 9h3v3H0zM10 1h3v3h-3z', '#445'),
  arc: p('M1.500 12Q2 2 12 1.500', '#555') + f('M0 10h3v3H0zM3 4h3v3H3zM10 0h3v3h-3z', '#445'),
  circle: c(6.5, 6.500, 5.500, '#555', '#eef4f6') + p('M6 7l4-4', '#445', 'none', 1.500),
  cloud: p('M2 5q-2-3 1-4 3-1 4 1 2-2 4 0 2 2 0 4 2 3 0 5-2 2-4 0-2 2-4 1-3-1-2-4-2-1 1-3z', '#555', '#eee'),
  spline: p('M.5 11q1-7 4-5t5-1 3-4', '#555', 'none', 1.200),
  ellipse: `<ellipse cx="6.500" cy="6.500" rx="5.500" ry="3.500" stroke="#555" fill="#eee"/>` + f('M5 2h3v2H5zM0 5h2v3H0zM11 5h2v3h-2z', '#445'),
  ellarc: p('M2 8q-2-4 4-5 6 0 6 3 0 4-6 4', '#555') + f('M1 7h3v2H1zM5 9h3v2H5z', '#445'),
  insert: p('M3.500 .5h6v5h-6zM.5 5.500h6v5h-6z', '#555', '#eee') + c(9, 8, 2, '#555') + p('M9 12h4v-3', '#222', 'none', 1.500),
  mkblock: p('M1.500 2.500h9v6h-9z', '#555', '#eee') + c(9, 9, 3, '#555', '#e6f0f2') + f('M0 7h3v3H0z', '#445'),
  point: f('M5 5h3v3H5z', '#556'),
  hatch: p('M2.500 0v13M10.500 0v13M0 2.500h13M0 10.500h13', '#555') + p('M3 6l3-3M3 10l7-7M6 10l4-4', '#888'),
  gradient: f('M3 4h7v6H3z', '#8ea3ad') + p('M2.500 0v13M10.500 0v13M0 2.500h13M0 10.500h13', '#555'),
  region: p('M.5 1.500h8l4 4v6H.5z', '#555', '#f4f4f4') + c(6, 7, 2.500, '#555', '#fff'),
  table: p('M.5 1.500h12v10H.5zM.5 6h12M.5 9h12M4.500 3v8M8.500 3v8', '#556', '#fff') + f('M0 1h13v2.500H0z', '#556'),
  bigA: t(2, 12, 'A', 13),
  addsel: c(3, 4, 2.500, '#3a8a35', '#6abb5e') + c(9, 10, 3, '#5e9ccc', '#cfe4f4') + p('M7 2q4 0 4 3', '#333') + f('M9 4h4l-2 3z', '#333'),
  erase: f('M1 11l2-4 4 2-3 4z', '#8c2f1a') + p('M5 8l7-7', '#c08a3c', 'none', 2.500) + p('M7 12.500h6', '#555'),
  copyo: c(3, 3, 2.500, '#555', '#fff') + c(7, 8, 2.500, B, '#fff') + c(10, 10, 2.500, B, '#d0e6f4') + p('M7 2h3v3', '#222', 'none', 1.500),
  mirror: p('M5.500 2v9h-5z', '#555', '#eee') + p('M8 2v9h4.500z', B, '#bfe0f2') + p('M6.700 0v13', '#555'),
  offset: p('M1 9h11V7q-2 0-2-3-3-4-6 0 0 3-3 3z', '#26507a', '#cfe6f4') + p('M4 6.500h4M1 11.500h11', B, 'none', 1.500),
  array: p('M.5 .5h4v4h-4z', K, '#eee') + p('M7.500 .5h4v4h-4zM.5 7.500h4v4h-4zM8 8h3', B, '#cfe6f4') + f('M12 8v5H7z', '#222'),
  moved: moveOf('#333', '#555') + f('M5 5h3v3H5z', '#eee'),
  rotate: p('M4 2a5.200 5.200 0 1 0 5 0', '#444', 'none', 1.200) + f('M3 0l4 2-4 3z', '#222'),
  scale: p('M.5 .5h12v12H8V5H.5z', B, '#a6d4ec') + p('M.5 6.500h6v6h-6z', '#444', '#fff'),
  stretch: p('M1.500 .5h6v12h-6z', '#444', '#fff') + p('M8 .5l5 12H8z', B, '#a6d4ec') + p('M3 8h5M6 6l2 2-2 2', '#222'),
  trim: p('M0 7h5M8 7h5', '#444') + p('M4 12l4-11', B, 'none', 1.500),
  extend: p('M0 7h3M4 7h3M7 7h2', '#444') + p('M8 12l4-10', B, 'none', 1.500),
  breakpt: p('M11 3.500H1.500v7H12', '#555', '#eee') + f('M9 1.500l4 2-4 2z', B),
  break: p('M4 3.500H.5v8h12v-8H9', '#555', '#eee') + f('M3 2h3v3H3zM8 2h3v3H8z', B),
  join: p('M0 6.500h13', '#555') + f('M3 4l4 2.500L3 9zM10 4L6 6.500 10 9z', B),
  chamfer: p('M.5 8v4.500h12V1H9', '#555', '#eee') + p('M.5 9L9 1', B), fillet: p('M.5 8v4.500h12V1H9', '#555', '#eee') + p('M.5 9Q1 2 9 1', B),
  blend: p('M1 11V5', '#555', 'none', 1.500) + p('M1 5q4-6 5 1t6-3', B, 'none', 1.200) + p('M12 3v7', '#555'),
  explode: f('M1 5l5-4 6 2-1 7-6 3-4-2z', '#7fc0e4') + p('M1.500 5.500h5v6h-5zM6 5l2-3h4M8 6l4-1v5l-3 2z', '#26709e', '#d8eef8'),
  ord1: p('M.5 1.500h6v4h-6zM6.500 7.500h6v4h-6z', '#555', '#eee') + f('M3 4h7v5H3z', '#7b8c98'),
  ord2: p('M3.500 1.500h6v4h-6z', '#555', '#9aa8b0') + p('M.5 5h6v4h-6zM5.500 7.500h7v5h-7z', '#555', '#eee'),
  binoc: f('M2 1h3v4h2V1h3l2 7v4H8V8H5v4H1V8z', '#444') + f('M2 8h2v3H2zM9 8h2v3H9z', '#ccc'),
  user: p('M6.500 1q3 0 3 3T8 7.500q4 1 4 4H1q0-3 4-4Q3.500 7 3.500 4t3-3z', '#444', '#eee'),
  exchange: f('M0 0h13v13H0z', '#173a86') + p('M2 2h3v9H2zM11 2H8v6M8 10h2M5 6h3', '#9fc4f4', 'none', 1.300),
  'help-c': c(6.5, 6.500, 6, '#234', '#2d66a8') + t(4, 10.500, '?', 10, '#fff'),
  min: p('M3 8.500h7', '#222', 'none', 1.500), restore: p('M4 5V2.500h7V8H8M2 5.500h6v5H2z', '#333'), close: p('M3 3l7 7M10 3l-7 7', '#222', 'none', 1.500),
  proj: f('M0 0h6v13H0z', '#6a7a3a') + f('M1 2h3v9H1z', '#d8dfa0') + p('M7 3h5M7 6h5M7 9h5M9 1v11', '#678'),
  bind: p('M3.500 3.500h8v8h-8z', T, '#d9eef4') + p('M1 9V2h5v5', '#246', 'none', 1.300), reload: p('M2.500 1.500h8v8h-8z', '#567', '#d9eef4') + p('M5 7h6v5', R, 'none', 2) + f('M2 7l4-3v6z', R),
  grid: f('M0 0h13v13H0z', '#ddd') + p('M.5 0v13M3.500 0v13M6.500 0v13M9.500 0v13M12.500 0v13M0 .5h13M0 3.500h13M0 6.500h13M0 9.500h13M0 12.500h13', '#333'),
  vpzoom: p('M4 3h6v7H4z', '#246', '#bfe0f4') + f('M0 5h4v3H0z', '#246') + '<rect x=".5" y=".5" width="12" height="12" fill="none" stroke="#a55" stroke-dasharray="2 2"/>',
  rotb: p('M4 2.500a4.500 4.500 0 1 0 5 0', '#2b6d9e', 'none', 2) + f('M2 0l5 2-4 4z', '#2b6d9e'),
  clip: f('M0 1h6l7 7v4z', '#345f86') + p('M1 12L12 3M1 5l10 7', R) + f('M7 1h6v5z', '#234'),
  oldnew: f('M0 1h9v8H0z', '#2e7f9e') + p('M3 5h4M9 3l3 4M4 10h6l-2 3', '#124', 'none', 1.500), export: disk('#5d7fb0', '#e5ecf5'),
  first: p('M2 2v9', '#555') + f('M10 2v9L4 6.500z', '#555'), prev: f('M9 2v9L3 6.500z', '#555'), next: f('M4 2v9l6-4.500z', '#555'), last: p('M11 2v9', '#555') + f('M3 2v9l6-4.500z', '#555'),
  snapm: f('M1 1h4v4H1zM7 3h4v3H7z', '#333') + p('M3 5h6v6', '#333') + p('M1 9h3M11 9h2', '#fff'),
  snapd: p('M1 3h8M1 6h8M1 9h8', '#333') + p('M11.500 1v10.500H1', '#333'),
  gridm: p('M1.500 1v11M4.500 1v11M7.500 1v11M10.500 1v11M0 2.500h13M0 5.500h13M0 8.500h13', '#333'),
  ortho: p('M1.500 1v10.500H12M1.500 7H6v4', '#333'), polar: c(6, 7, 4.500, '#333') + p('M6 7l6-6M6 7h6', '#333'),
  osnap: p('M2.500 3.500h10v8h-10z', '#555', '#fff') + c(2.5, 3, 1.500, '#c84'), osnap3: p('M2 4l3-3h7v7l-3 3H2z', '#555', '#ddd') + c(3, 9, 1.500, '#c84'),
  angm: p('M11 1L1 11.500h11', '#333'), otrack: p('M2.500 1v9.500H12M3 10l8-8', '#357') + f('M8 0h4v4z', Y),
  ducs: p('M1 6h11M6 2v9', '#246', 'none', 1.500) + f('M6 6h6v4H6z', '#569'), dyn: p('M6.500 1v11M1 6.500h11', '#111', 'none', 2),
  lwt: f('M0 0h13v13H0z', '#4e93c4') + p('M1 3h11M1 6h11M1 9h11M3 1v11M6 1v11M9 1v11', '#bce'), qp: p('M3.500 2.500h6v8h-6zM3 4h7', '#222', 'none', 1.500),
  sc: p('M2 1v6h5', '#234', 'none', 1.500) + f('M5 5h8v8H5z', '#3f9a40') + f('M7 7h4v4H7z', '#dfe'),
  lay1: p('M1 1h11v10H1z', '#333', '#eee') + p('M2 9h8L5 4', '#333'), lay2: p('M.5 1.500h5v6h-5zM7 1.500h5v6H7z', '#333', '#eee') + p('M0 10.500h13', '#333', 'none', 2),
  anno: p('M6.500 1l2 5 4 5-6-3-6 3 4-5zM6.500 1v7', '#444', '#eee'),
  annob: p('M5.500 1l2 5 4 5-6-3-5 3 3-5z', '#444', '#eee') + f('M8 2h4v6H8z', '#f0d060'), annog: p('M6.500 1l2 5 4 5-6-3-6 3 4-5z', '#777', '#aaa'),
  unlock2: p('M7 5V3q0-2 2-2t2 2v3', '#333', 'none', 1.500) + p('M1.500 5.500h7v6h-7z', '#333', '#ddd') + p('M5 7v3', '#333'),
  hw: p('M.5 2.500h11v6H.5z', '#345', '#8aa') + c(10, 9, 2.500, '#b83', '#f4dc70'), full: p('M.5 1.500h12v10H.5z', '#444', '#fff') + f('M0 1h13v2.500H0z', '#446')
};

const draw = (name) => `<svg viewBox="0 0 13 13">${ICONS[name] || ''}</svg>`;

document.querySelectorAll('[data-tools]').forEach((bar) => {
  bar.innerHTML = bar.dataset.tools.split(' ').map((tok) => {
    if (tok === '|') return '<i class="sep"></i>';
    if (tok === 'v') return '<button class="drop" aria-label="more"></button>';
    const on = tok.endsWith('+');
    const name = on ? tok.slice(0, -1) : tok;
    return `<button class="tool${on ? ' on' : ''}" aria-label="${name}">${draw(name)}</button>`;
  }).join('');
});
document.querySelectorAll('svg[data-icon]').forEach((svg) => {
  svg.setAttribute('viewBox', '0 0 13 13');
  svg.innerHTML = ICONS[svg.dataset.icon] || '';
});
```
